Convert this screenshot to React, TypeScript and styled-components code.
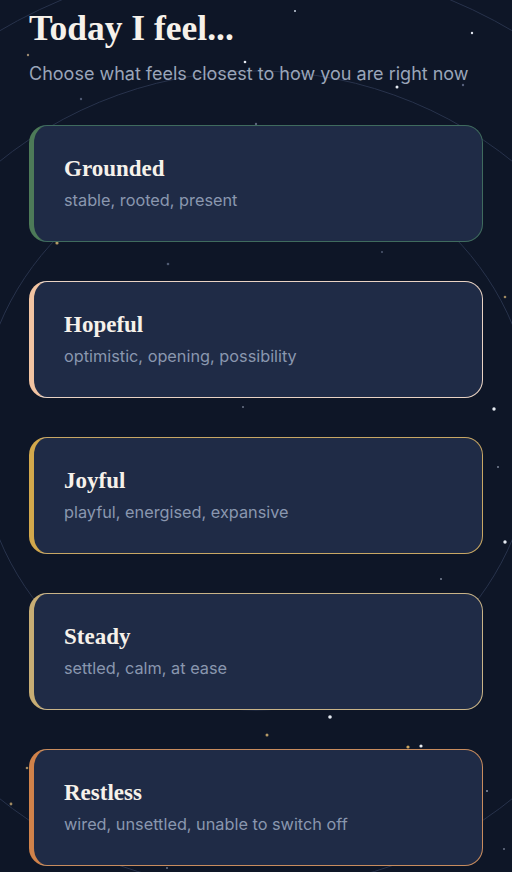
import React from "react";
import styled, { createGlobalStyle } from "styled-components";

const GlobalStyle = createGlobalStyle`
  html, body {
    margin: 0;
    padding: 0;
    background: #0e1627;
  }
  * { box-sizing: border-box; }
`;

const Page = styled.div`
  position: relative;
  min-height: 872px;
  overflow: hidden;
  background: #0e1627;
  padding: 8px 29px 40px;
`;

const Backdrop = styled.svg`
  position: absolute;
  left: 0;
  top: 0;
  width: 512px;
  height: 872px;
  pointer-events: none;
  z-index: 0;
`;

const Content = styled.div`
  position: relative;
  z-index: 1;
`;

const Title = styled.h1`
  margin: 0;
  font-family: "Liberation Serif", "Times New Roman", serif;
  font-weight: 700;
  font-size: 35.5px;
  line-height: 40px;
  color: #f6f1ea;
`;

const Subtitle = styled.p`
  margin: 14px 0 0;
  font-family: Inter, "Noto Sans", sans-serif;
  font-size: 18px;
  line-height: 24px;
  color: #9aa5b9;
  white-space: nowrap;
`;

const List = styled.div`
  margin-top: 39px;
  display: flex;
  flex-direction: column;
  gap: 39px;
`;

const Card = styled.button<{ $edge: string; $line: string }>`
  display: flex;
  flex-direction: column;
  justify-content: center;
  align-items: flex-start;
  gap: 7px;
  width: 454px;
  height: 117px;
  padding: 0 0 0 30px;
  background: #1f2b46;
  border: 1px solid ${(p) => p.$line};
  border-left: 5px solid ${(p) => p.$edge};
  border-radius: 18px;
  text-align: left;
  cursor: pointer;
`;

const CardTitle = styled.span`
  font-family: "Liberation Serif", "Times New Roman", serif;
  font-weight: 700;
  font-size: 23px;
  line-height: 26px;
  color: #f6f1ea;
`;

const CardText = styled.span`
  font-family: Inter, "Noto Sans", sans-serif;
  font-size: 16.3px;
  line-height: 22px;
  color: #8a97af;
`;

const moods = [
  { name: "Grounded", desc: "stable, rooted, present", edge: "#4d7a58", line: "#3f6b5e" },
  { name: "Hopeful", desc: "optimistic, opening, possibility", edge: "#f2c4a2", line: "#e9d3c4" },
  { name: "Joyful", desc: "playful, energised, expansive", edge: "#d2a84c", line: "#c8a764" },
  { name: "Steady", desc: "settled, calm, at ease", edge: "#c7ad74", line: "#c9b488" },
  { name: "Restless", desc: "wired, unsettled, unable to switch off", edge: "#d0824a", line: "#c88c5e" },
];

const stars: [number, number, number, string][] = [
  [295, 11, 1, "#c9d2e0"],
  [472, 33, 1.2, "#dfe5ee"],
  [28, 55, 1.2, "#9b8a70"],
  [245, 62, 1.3, "#e6ebf2"],
  [397, 87, 1.5, "#e6ebf2"],
  [463, 85, 1.2, "#56607a"],
  [81, 99, 1.2, "#4f5a72"],
  [256, 124, 1.2, "#5d667c"],
  [57, 243, 1.6, "#b59a66"],
  [168, 264, 1.3, "#4f5a72"],
  [382, 252, 1, "#4f5a72"],
  [243, 407, 1, "#6b7488"],
  [494, 409, 1.7, "#e6ebf2"],
  [505, 297, 1.3, "#a08a62"],
  [498, 467, 1, "#7a8396"],
  [505, 542, 1.7, "#e6ebf2"],
  [441, 579, 1, "#7a8396"],
  [330, 717, 1.8, "#e6ebf2"],
  [267, 735, 1.5, "#b59a66"],
  [408, 747, 1.6, "#c9a35e"],
  [421, 746, 1.6, "#e6ebf2"],
  [27, 768, 1.3, "#a08a62"],
  [11, 804, 1.4, "#a08a62"],
  [487, 791, 1, "#8a93a6"],
  [504, 849, 1, "#6b7488"],
  [167, 868, 1, "#6b7488"],
];

export default function App() {
  return (
    <>
      <GlobalStyle />
      <Page>
        <Backdrop viewBox="0 0 512 872" aria-hidden="true">
          <g fill="none" stroke="#2b3650" strokeWidth="1" opacity="0.9">
            <circle cx="256" cy="432" r="278" />
            <circle cx="256" cy="480" r="409" />
            <circle cx="256" cy="467" r="506" />
          </g>
          {stars.map(([x, y, r, c], i) => (
            <circle key={i} cx={x} cy={y} r={r} fill={c} />
          ))}
        </Backdrop>
        <Content>
          <Title>Today I feel...</Title>
          <Subtitle>Choose what feels closest to how you are right now</Subtitle>
          <List>
            {moods.map((m) => (
              <Card key={m.name} $edge={m.edge} $line={m.line} type="button">
                <CardTitle>{m.name}</CardTitle>
                <CardText>{m.desc}</CardText>
              </Card>
            ))}
          </List>
        </Content>
      </Page>
    </>
  );
}
